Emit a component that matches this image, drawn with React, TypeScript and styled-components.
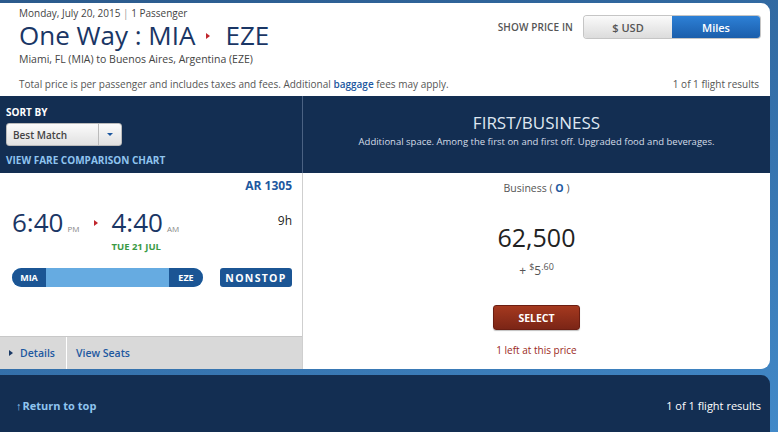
import React from 'react';
import styled, { createGlobalStyle } from 'styled-components';

const GlobalStyle = createGlobalStyle`
  html, body {
    margin: 0;
    padding: 0;
  }
  body {
    width: 778px;
    height: 432px;
    overflow: hidden;
    font-family: 'Open Sans', 'Liberation Sans', sans-serif;
    background: linear-gradient(160deg, #2b5a8c 0%, #336ea8 50%, #4289c8 100%);
  }
`;

const NAVY = '#132e52';
const LINK = '#1d58a0';
const LIGHT_LINK = '#8fc4ef';

const Page = styled.div`
  width: 770px;
  padding-top: 3px;
  display: flex;
  flex-direction: column;
  gap: 6px;
`;

const Card = styled.div`
  background: #fff;
  border-radius: 0 9px 9px 0;
  overflow: hidden;
`;

const Header = styled.header`
  height: 93px;
  box-sizing: border-box;
  padding: 4px 10px 0 19px;
  display: grid;
  grid-template-columns: 1fr auto;
  grid-template-rows: 64px auto;
`;

const SubInfo = styled.div<{ $size?: number }>`
  font-size: ${(p) => p.$size || 10}px;
  line-height: 13px;
  color: #444;
  span {
    color: #999;
  }
`;

const Title = styled.h1`
  margin: 2px 0 4px;
  font-weight: 400;
  font-size: 26px;
  line-height: 27px;
  color: #1a3665;
  display: flex;
  align-items: center;
`;

const Arrow = styled.i<{ $size?: number }>`
  display: inline-block;
  width: 0;
  height: 0;
  border-top: ${(p) => p.$size || 4}px solid transparent;
  border-bottom: ${(p) => p.$size || 4}px solid transparent;
  border-left: ${(p) => (p.$size || 4) + 1}px solid #c0262d;
  margin: 0 15px 0 11px;
`;

const PriceIn = styled.div`
  display: flex;
  align-items: center;
  gap: 11px;
  padding-top: 9px;
  align-self: start;
`;

const PriceLabel = styled.span`
  font-size: 10px;
  font-weight: 600;
  color: #555;
  letter-spacing: 0.1px;
`;

const Toggle = styled.div`
  display: flex;
  border-radius: 3px;
  overflow: hidden;
  box-shadow: 0 0 0 1px #c5c5c5;
`;

const ToggleBtn = styled.button<{ $active?: boolean }>`
  width: 88px;
  height: 22px;
  border: none;
  font-family: inherit;
  font-size: 11px;
  font-weight: 600;
  color: ${(p) => (p.$active ? '#fff' : '#555')};
  background: ${(p) =>
    p.$active
      ? 'linear-gradient(#2d80d6, #1b5eab)'
      : 'linear-gradient(#fafafa, #dcdcdc)'};
  padding: 0;
`;

const Fine = styled.div<{ $right?: boolean }>`
  font-size: 10px;
  line-height: 14px;
  color: #555;
  padding-top: 6px;
  text-align: ${(p) => (p.$right ? 'right' : 'left')};
  padding-right: ${(p) => (p.$right ? '1px' : '0')};
  a {
    color: ${LINK};
    font-weight: 600;
    text-decoration: none;
  }
`;

const Row = styled.div<{ $height: number }>`
  display: grid;
  grid-template-columns: 303px 1fr;
  height: ${(p) => p.$height}px;
`;

const NavyCell = styled.div`
  background: ${NAVY};
  color: #fff;
`;

const SortCell = styled(NavyCell)`
  padding: 10px 0 0 6px;
  border-right: 1px solid #4b6283;
`;

const SortLabel = styled.div`
  font-size: 10px;
  font-weight: 700;
  line-height: 12px;
`;

const Select = styled.div`
  margin-top: 5px;
  width: 116px;
  height: 23px;
  display: flex;
  border-radius: 3px;
  background: linear-gradient(#fbfbfb, #e1e1e1);
  border: 1px solid #bbb;
  box-sizing: border-box;
  color: #444;
  font-size: 10px;
  font-weight: 600;
`;

const SelectText = styled.div`
  flex: 1;
  display: flex;
  align-items: center;
  padding-left: 6px;
  border-right: 1px solid #bbb;
`;

const SelectCaret = styled.div`
  width: 22px;
  display: flex;
  align-items: center;
  justify-content: center;
  &::after {
    content: '';
    border-left: 3px solid transparent;
    border-right: 3px solid transparent;
    border-top: 3px solid #1d58a0;
  }
`;

const NavyLink = styled.a`
  display: block;
  margin-top: 8px;
  font-size: 10px;
  font-weight: 700;
  color: ${LIGHT_LINK};
  text-decoration: none;
  line-height: 12px;
`;

const CabinCell = styled(NavyCell)`
  text-align: center;
  padding-top: 17px;
`;

const CabinTitle = styled.div`
  font-size: 17px;
  line-height: 20px;
  color: #dfe7f1;
`;

const CabinDesc = styled.div`
  font-size: 9.5px;
  line-height: 14px;
  margin-top: 2px;
  color: #d5dde8;
`;

const FlightCell = styled.div`
  border-right: 1px solid #cfcfcf;
  display: flex;
  flex-direction: column;
`;

const FlightInfo = styled.div`
  flex: 1;
  padding: 5px 10px 0 12px;
`;

const FlightNo = styled.div`
  text-align: right;
  font-size: 12px;
  font-weight: 700;
  color: ${LINK};
  line-height: 16px;
`;

const Times = styled.div`
  display: flex;
  align-items: flex-start;
  margin-top: 13px;
`;

const TimeBlock = styled.div`
  display: flex;
  flex-direction: column;
`;

const Time = styled.div`
  font-size: 26px;
  line-height: 30px;
  color: #1a3665;
  display: flex;
  align-items: baseline;
  small {
    font-size: 8px;
    color: #888;
    margin-left: 4px;
  }
`;

const NextDay = styled.div`
  font-size: 9.5px;
  font-weight: 700;
  color: #3b9a45;
  line-height: 10px;
  margin-top: -2px;
`;

const TimeArrow = styled(Arrow)`
  margin: 13px 13px 0 15px;
`;

const Duration = styled.div`
  margin-left: auto;
  font-size: 12px;
  color: #222;
  padding-top: 5px;
`;

const RouteRow = styled.div`
  display: flex;
  align-items: center;
  margin-top: 16px;
`;

const RouteBar = styled.div`
  width: 191px;
  height: 19px;
  border-radius: 10px;
  overflow: hidden;
  display: flex;
  background: #66abe1;
`;

const Airport = styled.div`
  width: 34px;
  background: #1b5594;
  color: #fff;
  font-size: 9px;
  font-weight: 700;
  display: flex;
  align-items: center;
  justify-content: center;
  margin-right: auto;
  &:last-child {
    margin-right: 0;
    margin-left: auto;
  }
`;

const Badge = styled.div`
  margin-left: auto;
  width: 72px;
  height: 19px;
  border-radius: 3px;
  background: #1b5594;
  color: #fff;
  font-size: 10.5px;
  font-weight: 700;
  letter-spacing: 1.3px;
  display: flex;
  align-items: center;
  justify-content: center;
`;

const Tabs = styled.div`
  height: 32px;
  background: #d9d9d9;
  border-top: 1px solid #c8c8c8;
  display: flex;
`;

const Tab = styled.a<{ $divider?: boolean }>`
  display: flex;
  align-items: center;
  gap: 7px;
  padding: 0 ${(p) => (p.$divider ? '11px' : '0')} 0 9px;
  border-right: ${(p) => (p.$divider ? '1px solid #fff' : 'none')};
  font-size: 10.5px;
  font-weight: 600;
  color: ${LINK};
  text-decoration: none;
  &::before {
    content: ${(p) => (p.$divider ? "''" : 'none')};
    border-top: 3.5px solid transparent;
    border-bottom: 3.5px solid transparent;
    border-left: 4px solid #1b3a66;
  }
`;

const FareCell = styled.div`
  display: flex;
  flex-direction: column;
  align-items: center;
  padding-top: 8px;
`;

const FareClass = styled.div`
  font-size: 10.5px;
  color: #555;
  line-height: 14px;
  b {
    color: ${LINK};
    font-weight: 700;
  }
`;

const Miles = styled.div`
  margin-top: 27px;
  font-size: 25px;
  line-height: 30px;
  color: #222;
`;

const Fee = styled.div`
  font-size: 12px;
  color: #555;
  line-height: 16px;
  margin-top: 7px;
  sup {
    font-size: 9px;
  }
`;

const SelectBtn = styled.button`
  margin-top: 26px;
  width: 87px;
  height: 25px;
  border-radius: 3px;
  border: 1px solid #6b1e12;
  background: linear-gradient(#a5391f, #7b2516);
  color: #fff;
  font-family: inherit;
  font-size: 10.5px;
  font-weight: 700;
  box-shadow: 0 1px 1px rgba(0, 0, 0, 0.25);
`;

const Remaining = styled.div`
  margin-top: 13px;
  font-size: 10px;
  color: #9b2a22;
`;

const Footer = styled.footer`
  height: 60px;
  background: ${NAVY};
  border-radius: 0 9px 0 0;
  display: flex;
  align-items: center;
  justify-content: space-between;
  padding: 0 9px 4px 16px;
`;

const TopLink = styled.a`
  font-size: 11px;
  font-weight: 700;
  color: ${LIGHT_LINK};
  text-decoration: none;
  span {
    font-weight: 400;
    margin-right: 1px;
  }
`;

const FooterCount = styled.div`
  font-size: 11px;
  color: #fff;
`;

export default function App() {
  return (
    <>
      <GlobalStyle />
      <Page>
        <Card>
          <Header>
            <div>
              <SubInfo>
                Monday, July 20, 2015 <span>|</span> 1 Passenger
              </SubInfo>
              <Title>
                One Way : MIA
                <Arrow $size={3} />
                EZE
              </Title>
              <SubInfo $size={10.5}>Miami, FL (MIA) to Buenos Aires, Argentina (EZE)</SubInfo>
            </div>
            <PriceIn>
              <PriceLabel>SHOW PRICE IN</PriceLabel>
              <Toggle>
                <ToggleBtn>$ USD</ToggleBtn>
                <ToggleBtn $active>Miles</ToggleBtn>
              </Toggle>
            </PriceIn>
            <Fine>
              Total price is per passenger and includes taxes and fees. Additional{' '}
              <a href="#">baggage</a> fees may apply.
            </Fine>
            <Fine $right>1 of 1 flight results</Fine>
          </Header>

          <Row $height={77}>
            <SortCell>
              <SortLabel>SORT BY</SortLabel>
              <Select>
                <SelectText>Best Match</SelectText>
                <SelectCaret />
              </Select>
              <NavyLink href="#">VIEW FARE COMPARISON CHART</NavyLink>
            </SortCell>
            <CabinCell>
              <CabinTitle>FIRST/BUSINESS</CabinTitle>
              <CabinDesc>
                Additional space. Among the first on and first off. Upgraded food and beverages.
              </CabinDesc>
            </CabinCell>
          </Row>

          <Row $height={196}>
            <FlightCell>
              <FlightInfo>
                <FlightNo>AR 1305</FlightNo>
                <Times>
                  <TimeBlock>
                    <Time>
                      6:40<small>PM</small>
                    </Time>
                  </TimeBlock>
                  <TimeArrow $size={3} />
                  <TimeBlock>
                    <Time>
                      4:40<small>AM</small>
                    </Time>
                    <NextDay>TUE 21 JUL</NextDay>
                  </TimeBlock>
                  <Duration>9h</Duration>
                </Times>
                <RouteRow>
                  <RouteBar>
                    <Airport>MIA</Airport>
                    <Airport>EZE</Airport>
                  </RouteBar>
                  <Badge>NONSTOP</Badge>
                </RouteRow>
              </FlightInfo>
              <Tabs>
                <Tab href="#" $divider>
                  Details
                </Tab>
                <Tab href="#">View Seats</Tab>
              </Tabs>
            </FlightCell>
            <FareCell>
              <FareClass>
                Business ( <b>O</b> )
              </FareClass>
              <Miles>62,500</Miles>
              <Fee>
                + <sup>$</sup>5<sup>.60</sup>
              </Fee>
              <SelectBtn>SELECT</SelectBtn>
              <Remaining>1 left at this price</Remaining>
            </FareCell>
          </Row>
        </Card>

        <Footer>
          <TopLink href="#">
            <span>↑</span>Return to top
          </TopLink>
          <FooterCount>1 of 1 flight results</FooterCount>
        </Footer>
      </Page>
    </>
  );
}
